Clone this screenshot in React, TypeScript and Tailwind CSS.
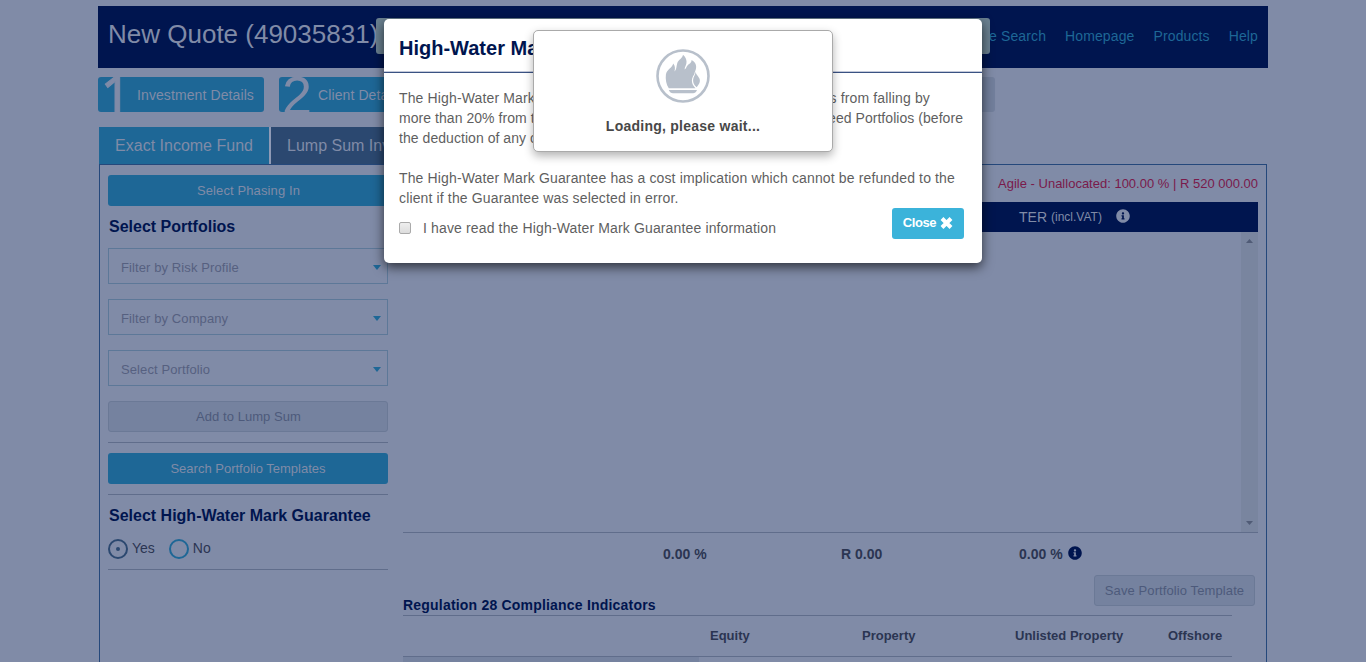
import React from "react";
import { FaInfoCircle } from "react-icons/fa";

function Step({ number, label, font }: { number: string; label: string; font: string }) {
  return (
    <div className="relative mr-[15px] flex h-[35px] w-[166px] shrink-0 items-center overflow-hidden rounded-[3px] bg-[#1e6796] pl-[38px] text-sm text-[#808ba7]">
      <span className={`absolute left-[2px] w-8 text-center leading-[35px] ${font}`}>{number}</span>
      <span className="w-[118px] pl-px tracking-[0.1px] whitespace-nowrap">{label}</span>
    </div>
  );
}

function Picker({ label }: { label: string }) {
  return (
    <div className="flex h-9 items-center justify-between border border-[#5d7898] pt-0.5 pr-[6px] pl-3 text-[13px] text-[#566080]">
      <span className="pt-px tracking-[0.1px]">{label}</span>
      <svg width="8" height="5" viewBox="0 0 8 5" fill="#1e6796">
        <path d="M0 0h8L4 5z" />
      </svg>
    </div>
  );
}

function FlameLogo() {
  return (
    <svg width="54" height="54" viewBox="0 0 54 54" fill="#b8c0cb">
      <circle cx="27" cy="27" r="25.5" fill="none" stroke="#b8c0cb" strokeWidth="2.6" />
      <path d="M12.800 39.300C10.200 35.500 9.300 30 9.900 25.500C10.800 20.500 16 19 17.300 14.500C19.300 17 19.200 19.500 18.500 22.500C20.500 21 20.300 17.500 21.300 14C22.600 10.500 26.500 9.500 27 5.800C30 8.500 31 11.500 30.400 14.500C29.800 17 28.500 18.500 28.700 20.500C30 19.500 30.300 18 31.500 16.500C33 14.500 35.800 14 35.500 11C39 12.800 40.800 16 40 19.500C39.600 21.500 38.700 23 38.400 25C36.300 28 35.300 31 36.200 34C36.800 36.300 38 37.500 39.500 39.300Z" />
      <path d="M39.700 22.500C39.600 26 44.200 28 43.900 32C43.700 34.800 41.700 36.700 40.700 38.200C38.300 36.300 36.900 33.800 37.100 31C37.300 27.800 39.300 26.300 39.700 22.500Z" />
      <path d="M12.800 41H41C40 43.300 38.800 44.200 37.200 44.200H17C15 44.200 13.800 43.300 12.800 41Z" />
    </svg>
  );
}

export default function App() {
  return (
    <div className="relative h-[662px] w-[1366px] overflow-hidden bg-[#808ba7] pt-1.5 font-['Liberation_Sans',Arial,sans-serif] text-[#2b3552]">
      <div className="mx-auto w-[1170px]">
        <header className="flex h-[62px] items-center justify-between bg-[#00154f] pr-2.5 pl-2.5">
          <h1 className="pb-1.5 text-[26px] text-[#808ba7]">New Quote (49035831)</h1>
          <nav className="flex gap-[19px] pb-0.5 text-sm tracking-[0.12px] text-[#1e6796]">
            <a>Quote Search</a>
            <a>Homepage</a>
            <a>Products</a>
            <a>Help</a>
          </nav>
        </header>

        <div className="mt-[9px] flex h-[35px]">
          <Step number="1" label="Investment Details" font="top-0 font-['Noto_Sans',sans-serif] text-[54px] [-webkit-text-stroke:1px_#808ba7]" />
          <Step number="2" label="Client Details" font="top-px text-[54px]" />
          <div className="ml-[370px] h-[35px] w-[165px] rounded-[3px] bg-[#727f9c]" />
        </div>

        <div className="mt-[15px] ml-px flex h-[37px] w-[510px] text-base text-[#808ba7]">
          <div className="flex w-[170px] items-center justify-center bg-[#1e6796]">Exact Income Fund</div>
          <div className="w-0.5 bg-[#8f9ab5]" />
          <div className="flex w-[200px] items-center bg-[#2b4870] pl-4 whitespace-nowrap">Lump Sum Investment</div>
        </div>

        <main className="ml-px flex h-[520px] w-[1168px] gap-[15px] border border-[#25487b] px-2 pt-2.5">
          <aside className="flex w-[280px] shrink-0 flex-col text-[13px]">
            <button className="h-[31px] rounded-[3px] bg-[#1e6796] pl-px tracking-[0.12px] text-[#808ba7]">Select Phasing In</button>
            <h2 className="flex h-[42px] items-center pl-px text-base font-bold text-[#00154f]">Select Portfolios</h2>
            <div className="flex flex-col gap-[15px]">
              <Picker label="Filter by Risk Profile" />
              <Picker label="Filter by Company" />
              <Picker label="Select Portfolio" />
              <button className="h-[31px] rounded-[3px] border border-[#6b7996] bg-[#75829f] pl-px tracking-[0.05px] text-[#4d5a7b]">Add to Lump Sum</button>
            </div>
            <div className="mt-2.5 flex flex-col border-y border-[#606d8b] py-2.5">
              <button className="h-[31px] rounded-[3px] bg-[#1e6796] text-[#808ba7]">Search Portfolio Templates</button>
            </div>
            <h2 className="flex h-[42px] items-center pl-px text-base font-bold text-[#00154f]">Select High-Water Mark Guarantee</h2>
            <div className="flex h-[33px] items-start gap-3.5 border-b border-[#606d8b] pt-0.5 text-sm leading-5">
              <label className="flex h-5 items-center gap-1">
                <span className="flex size-5 items-center justify-center rounded-full border-2 border-[#2b4870]">
                  <span className="size-1 rounded-full bg-[#2b4870]" />
                </span>
                <span className="mb-0.5">Yes</span>
              </label>
              <label className="flex h-5 items-center gap-1">
                <span className="size-5 rounded-full border-2 border-[#1e6796]" />
                <span className="mb-0.5">No</span>
              </label>
            </div>
          </aside>

          <section className="w-[855px] shrink-0">
            <div className="flex h-[27px] items-start justify-end text-[13px] leading-[17px] text-[#7a1a4b]">Agile - Unallocated: 100.00 % | R 520 000.00</div>
            <div className="flex h-[30px] items-center bg-[#00154f] pl-[616px] text-sm text-[#808ba7]">
              TER <span className="mt-0.5 ml-1 text-[12px]">(incl.VAT)</span>
              <FaInfoCircle className="mb-0.5 ml-3.5 size-3.5" />
            </div>
            <div className="flex h-[301px] justify-end border-b border-[#606d8b]">
              <div className="flex w-[17px] flex-col items-center justify-between bg-[#79859f] pt-[7px] pb-[7px]">
                <svg width="7" height="4" viewBox="0 0 7 4" fill="#505b76"><path d="M0 4h7L3.500 0z" /></svg>
                <svg width="7" height="4" viewBox="0 0 7 4" fill="#505b76"><path d="M0 0h7L3.500 4z" /></svg>
              </div>
            </div>
            <div className="flex h-[42px] items-center pl-[260px] text-[14px] font-bold">
              <span className="w-[178px]">0.00 %</span>
              <span className="w-[178px]">R 0.00</span>
              <span>0.00 %</span>
              <FaInfoCircle className="mb-0.5 ml-[5px] size-3.5 text-[#00154f]" />
            </div>
            <div className="flex h-10 items-start justify-between pr-[3px]">
              <h3 className="mt-[22px] text-[14px] leading-4 font-bold tracking-[0.2px] text-[#00154f]">Regulation 28 Compliance Indicators</h3>
              <button className="h-[31px] w-[161px] rounded-[3px] border border-[#6b7996] bg-[#75829f] text-[13px] tracking-[0.1px] text-[#4d5a7b]">Save Portfolio Template</button>
            </div>
            <div className="flex h-[42px] w-[829px] items-center border-y border-[#606d8b] pl-[307px] text-[13px] font-bold">
              <span className="w-[152px]">Equity</span>
              <span className="w-[153px]">Property</span>
              <span className="w-[153px]">Unlisted Property</span>
              <span>Offshore</span>
            </div>
            <div className="h-2 w-[296px] bg-[#75829f]" />
          </section>
        </main>
      </div>

      <div className="absolute top-[18px] left-[376px] h-9 w-[614px] rounded-[3px] bg-[#6a8090]" />

      <div className="absolute top-[19px] left-[384px] h-[244px] w-[598px] rounded-[5px] bg-white text-sm text-[#5f5f5f] shadow-[0_4px_12px_rgba(0,0,0,0.65)]">
        <h2 className="flex h-[53px] items-center border-b border-[#c3c9da] pt-[5px] pl-[15px] text-xl font-bold text-[#00154f]">High-Water Mark Guarantee</h2>
        <div className="border-t border-[#3a5283] pt-[15px] pl-[15px] leading-5 tracking-[0.14px] whitespace-nowrap">
          <p className="flex w-[531px] justify-between"><span>The High-Water Mark Guarantee</span><span>protects portfolios from falling by</span></p>
          <p className="flex w-[564px] justify-between"><span className="tracking-[0.05px]">more than 20% from the highest</span><span className="tracking-[0.05px]">value of Guaranteed Portfolios (before</span></p>
          <p className="tracking-[0.05px]">the deduction of any charges).</p>
          <p className="mt-5">The High-Water Mark Guarantee has a cost implication which cannot be refunded to the</p>
          <p>client if the Guarantee was selected in error.</p>
          <div className="mt-2.5 flex h-5 w-[565px] items-center">
            <span className="size-3 rounded-[2px] border border-[#aaa] bg-linear-to-b from-[#eee] to-[#ddd]" />
            <span className="ml-3">I have read the High-Water Mark Guarantee information</span>
            <button className="mb-2.5 ml-auto flex h-[31px] w-[72px] items-center justify-center gap-1 rounded-[3px] bg-[#3bb3da] text-[13px] font-bold tracking-[-0.4px] text-white">
              Close
              <svg width="13" height="12" viewBox="0 0 13 12" stroke="white" strokeWidth="4" className="mb-px">
                <path d="M2 1.500L11 10.500M11 1.500L2 10.500" />
              </svg>
            </button>
          </div>
        </div>
      </div>

      <div className="absolute top-[30px] left-[533px] flex h-[122px] w-[300px] flex-col items-center rounded-[5px] border border-[#aaa] bg-white pt-[18px] shadow-[0_4px_10px_rgba(0,0,0,0.3)]">
        <FlameLogo />
        <p className="mt-[13px] text-[14px] leading-5 font-bold tracking-[0.25px] text-[#484848]">Loading, please wait...</p>
      </div>
    </div>
  );
}
